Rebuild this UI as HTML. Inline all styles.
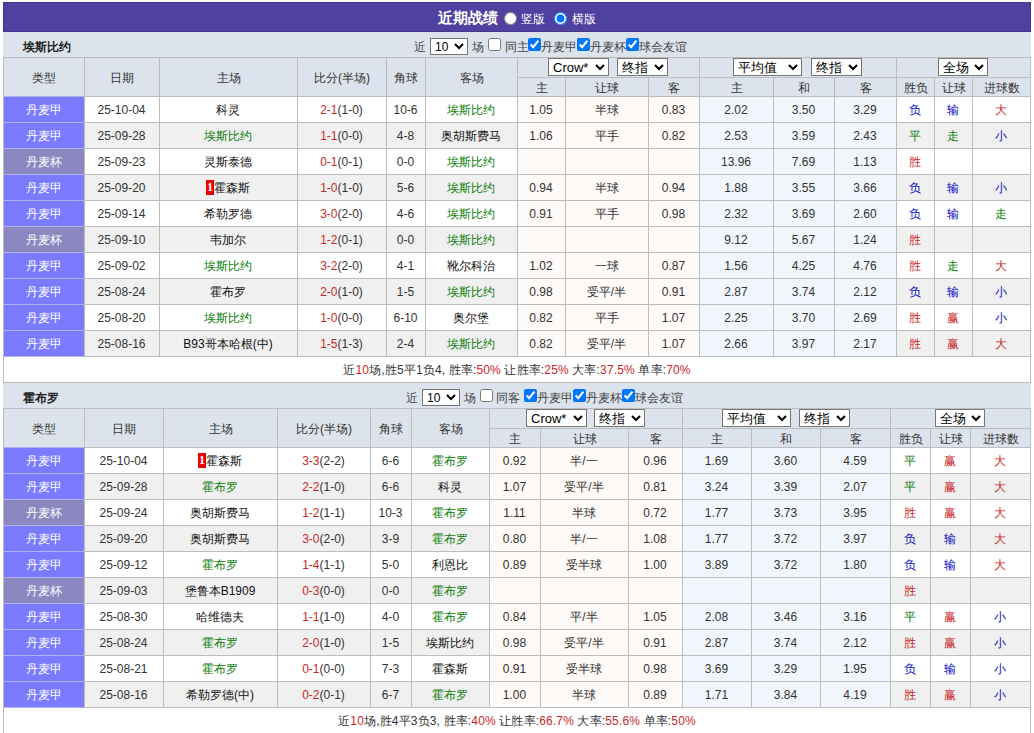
<!DOCTYPE html>
<html><head><meta charset="utf-8"><style>
html,body{margin:0;padding:0;background:#fff;width:1034px;height:733px;overflow:hidden}
body{position:relative;font-family:"Liberation Sans",sans-serif;font-size:12px;color:#333;font-weight:500}
div,select,input{position:absolute;box-sizing:border-box}
input{margin:0;width:13px;height:13px}
select{font-family:"Liberation Sans",sans-serif;padding:0;color:#000;background:#fff}
.t{text-align:center;white-space:nowrap}
.l{white-space:nowrap}
.tm{color:#111}
.bd{display:inline-block;background:#e00;color:#fff;width:8px;height:15px;line-height:15px;text-align:center;font-family:"Liberation Serif",serif;font-weight:bold;font-size:12px;vertical-align:middle;position:relative;top:-1px}
</style></head><body>
<div style="left:3px;top:2px;width:1028px;height:30px;background:#5040a0;box-sizing:border-box;border:1px solid #43378a"></div>
<div style="left:3px;top:32px;width:1028px;height:25px;background:#dde3ec"></div>
<div style="left:3px;top:57px;width:1028px;height:39px;background:#dde3ec"></div>
<div style="left:3px;top:96px;width:1028px;height:26px;background:#ffffff"></div>
<div style="left:3px;top:96px;width:81px;height:26px;background:#7b7bff"></div>
<div style="left:517px;top:96px;width:182px;height:26px;background:#fdfaf7"></div>
<div style="left:699px;top:96px;width:197px;height:26px;background:#f0f6fb"></div>
<div style="left:3px;top:122px;width:1028px;height:26px;background:#f0f0f0"></div>
<div style="left:3px;top:122px;width:81px;height:26px;background:#7b7bff"></div>
<div style="left:517px;top:122px;width:182px;height:26px;background:#fdfaf7"></div>
<div style="left:699px;top:122px;width:197px;height:26px;background:#f0f6fb"></div>
<div style="left:3px;top:148px;width:1028px;height:26px;background:#ffffff"></div>
<div style="left:3px;top:148px;width:81px;height:26px;background:#8b88c1"></div>
<div style="left:517px;top:148px;width:182px;height:26px;background:#fdfaf7"></div>
<div style="left:699px;top:148px;width:197px;height:26px;background:#f0f6fb"></div>
<div style="left:3px;top:174px;width:1028px;height:26px;background:#f0f0f0"></div>
<div style="left:3px;top:174px;width:81px;height:26px;background:#7b7bff"></div>
<div style="left:517px;top:174px;width:182px;height:26px;background:#fdfaf7"></div>
<div style="left:699px;top:174px;width:197px;height:26px;background:#f0f6fb"></div>
<div style="left:3px;top:200px;width:1028px;height:26px;background:#ffffff"></div>
<div style="left:3px;top:200px;width:81px;height:26px;background:#7b7bff"></div>
<div style="left:517px;top:200px;width:182px;height:26px;background:#fdfaf7"></div>
<div style="left:699px;top:200px;width:197px;height:26px;background:#f0f6fb"></div>
<div style="left:3px;top:226px;width:1028px;height:26px;background:#f0f0f0"></div>
<div style="left:3px;top:226px;width:81px;height:26px;background:#8b88c1"></div>
<div style="left:517px;top:226px;width:182px;height:26px;background:#fdfaf7"></div>
<div style="left:699px;top:226px;width:197px;height:26px;background:#f0f6fb"></div>
<div style="left:3px;top:252px;width:1028px;height:26px;background:#ffffff"></div>
<div style="left:3px;top:252px;width:81px;height:26px;background:#7b7bff"></div>
<div style="left:517px;top:252px;width:182px;height:26px;background:#fdfaf7"></div>
<div style="left:699px;top:252px;width:197px;height:26px;background:#f0f6fb"></div>
<div style="left:3px;top:278px;width:1028px;height:26px;background:#f0f0f0"></div>
<div style="left:3px;top:278px;width:81px;height:26px;background:#7b7bff"></div>
<div style="left:517px;top:278px;width:182px;height:26px;background:#fdfaf7"></div>
<div style="left:699px;top:278px;width:197px;height:26px;background:#f0f6fb"></div>
<div style="left:3px;top:304px;width:1028px;height:26px;background:#ffffff"></div>
<div style="left:3px;top:304px;width:81px;height:26px;background:#7b7bff"></div>
<div style="left:517px;top:304px;width:182px;height:26px;background:#fdfaf7"></div>
<div style="left:699px;top:304px;width:197px;height:26px;background:#f0f6fb"></div>
<div style="left:3px;top:330px;width:1028px;height:26px;background:#f0f0f0"></div>
<div style="left:3px;top:330px;width:81px;height:26px;background:#7b7bff"></div>
<div style="left:517px;top:330px;width:182px;height:26px;background:#fdfaf7"></div>
<div style="left:699px;top:330px;width:197px;height:26px;background:#f0f6fb"></div>
<div style="left:3px;top:356px;width:1028px;height:26px;background:#fff"></div>
<div style="left:3px;top:57px;width:1028px;height:1px;background:#bdbdbd"></div>
<div style="left:517px;top:77px;width:513px;height:1px;background:#bdbdbd"></div>
<div style="left:3px;top:96px;width:1028px;height:1px;background:#bdbdbd"></div>
<div style="left:4px;top:96px;width:80px;height:1px;background:#b2b0ee"></div>
<div style="left:3px;top:122px;width:1028px;height:1px;background:#bdbdbd"></div>
<div style="left:4px;top:122px;width:80px;height:1px;background:#b2b0ee"></div>
<div style="left:3px;top:148px;width:1028px;height:1px;background:#bdbdbd"></div>
<div style="left:4px;top:148px;width:80px;height:1px;background:#b2b0ee"></div>
<div style="left:3px;top:174px;width:1028px;height:1px;background:#bdbdbd"></div>
<div style="left:4px;top:174px;width:80px;height:1px;background:#b2b0ee"></div>
<div style="left:3px;top:200px;width:1028px;height:1px;background:#bdbdbd"></div>
<div style="left:4px;top:200px;width:80px;height:1px;background:#b2b0ee"></div>
<div style="left:3px;top:226px;width:1028px;height:1px;background:#bdbdbd"></div>
<div style="left:4px;top:226px;width:80px;height:1px;background:#b2b0ee"></div>
<div style="left:3px;top:252px;width:1028px;height:1px;background:#bdbdbd"></div>
<div style="left:4px;top:252px;width:80px;height:1px;background:#b2b0ee"></div>
<div style="left:3px;top:278px;width:1028px;height:1px;background:#bdbdbd"></div>
<div style="left:4px;top:278px;width:80px;height:1px;background:#b2b0ee"></div>
<div style="left:3px;top:304px;width:1028px;height:1px;background:#bdbdbd"></div>
<div style="left:4px;top:304px;width:80px;height:1px;background:#b2b0ee"></div>
<div style="left:3px;top:330px;width:1028px;height:1px;background:#bdbdbd"></div>
<div style="left:4px;top:330px;width:80px;height:1px;background:#b2b0ee"></div>
<div style="left:3px;top:356px;width:1028px;height:1px;background:#bdbdbd"></div>
<div style="left:4px;top:356px;width:80px;height:1px;background:#b2b0ee"></div>
<div style="left:3px;top:382px;width:1028px;height:1px;background:#bdbdbd"></div>
<div style="left:3px;top:57px;width:1px;height:325px;background:#bdbdbd"></div>
<div style="left:84px;top:57px;width:1px;height:299px;background:#bdbdbd"></div>
<div style="left:159px;top:57px;width:1px;height:299px;background:#bdbdbd"></div>
<div style="left:297px;top:57px;width:1px;height:299px;background:#bdbdbd"></div>
<div style="left:386px;top:57px;width:1px;height:299px;background:#bdbdbd"></div>
<div style="left:425px;top:57px;width:1px;height:299px;background:#bdbdbd"></div>
<div style="left:517px;top:57px;width:1px;height:299px;background:#bdbdbd"></div>
<div style="left:565px;top:77px;width:1px;height:279px;background:#bdbdbd"></div>
<div style="left:648px;top:77px;width:1px;height:279px;background:#bdbdbd"></div>
<div style="left:699px;top:57px;width:1px;height:299px;background:#bdbdbd"></div>
<div style="left:773px;top:77px;width:1px;height:279px;background:#bdbdbd"></div>
<div style="left:834px;top:77px;width:1px;height:279px;background:#bdbdbd"></div>
<div style="left:896px;top:57px;width:1px;height:299px;background:#bdbdbd"></div>
<div style="left:934px;top:77px;width:1px;height:279px;background:#bdbdbd"></div>
<div style="left:972px;top:77px;width:1px;height:279px;background:#bdbdbd"></div>
<div style="left:1030px;top:57px;width:1px;height:325px;background:#bdbdbd"></div>
<div class="t" style="left:4px;top:59px;width:80px;height:38px;line-height:38px;color:#333">类型</div>
<div class="t" style="left:85px;top:59px;width:74px;height:38px;line-height:38px;color:#333">日期</div>
<div class="t" style="left:160px;top:59px;width:137px;height:38px;line-height:38px;color:#333">主场</div>
<div class="t" style="left:298px;top:59px;width:88px;height:38px;line-height:38px;color:#333">比分(半场)</div>
<div class="t" style="left:387px;top:59px;width:38px;height:38px;line-height:38px;color:#333">角球</div>
<div class="t" style="left:426px;top:59px;width:91px;height:38px;line-height:38px;color:#333">客场</div>
<div class="t" style="left:518px;top:79px;width:47px;height:18px;line-height:18px;color:#333">主</div>
<div class="t" style="left:566px;top:79px;width:82px;height:18px;line-height:18px;color:#333">让球</div>
<div class="t" style="left:649px;top:79px;width:50px;height:18px;line-height:18px;color:#333">客</div>
<div class="t" style="left:700px;top:79px;width:73px;height:18px;line-height:18px;color:#333">主</div>
<div class="t" style="left:774px;top:79px;width:60px;height:18px;line-height:18px;color:#333">和</div>
<div class="t" style="left:835px;top:79px;width:61px;height:18px;line-height:18px;color:#333">客</div>
<div class="t" style="left:897px;top:79px;width:37px;height:18px;line-height:18px;color:#333">胜负</div>
<div class="t" style="left:935px;top:79px;width:37px;height:18px;line-height:18px;color:#333">让球</div>
<div class="t" style="left:973px;top:79px;width:57px;height:18px;line-height:18px;color:#333">进球数</div>
<div class="t" style="left:3px;top:98px;width:81px;height:25px;line-height:25px;color:#fff">丹麦甲</div>
<div class="t" style="left:84px;top:98px;width:75px;height:25px;line-height:25px;">25-10-04</div>
<div class="t" style="left:159px;top:98px;width:138px;height:25px;line-height:25px;"><span class="tm">科灵</span></div>
<div class="t" style="left:297px;top:98px;width:89px;height:25px;line-height:25px;"><span style="color:#c92828">2-1</span>(1-0)</div>
<div class="t" style="left:386px;top:98px;width:39px;height:25px;line-height:25px;">10-6</div>
<div class="t" style="left:425px;top:98px;width:92px;height:25px;line-height:25px;"><span style="color:#0a7d0a">埃斯比约</span></div>
<div class="t" style="left:517px;top:98px;width:48px;height:25px;line-height:25px;">1.05</div>
<div class="t" style="left:565px;top:98px;width:83px;height:25px;line-height:25px;">半球</div>
<div class="t" style="left:648px;top:98px;width:51px;height:25px;line-height:25px;">0.83</div>
<div class="t" style="left:699px;top:98px;width:74px;height:25px;line-height:25px;">2.02</div>
<div class="t" style="left:773px;top:98px;width:61px;height:25px;line-height:25px;">3.50</div>
<div class="t" style="left:834px;top:98px;width:62px;height:25px;line-height:25px;">3.29</div>
<div class="t" style="left:896px;top:98px;width:38px;height:25px;line-height:25px;"><span style="color:#0a0ac8">负</span></div>
<div class="t" style="left:934px;top:98px;width:38px;height:25px;line-height:25px;"><span style="color:#0a0ac8">输</span></div>
<div class="t" style="left:972px;top:98px;width:58px;height:25px;line-height:25px;"><span style="color:#c92828">大</span></div>
<div class="t" style="left:3px;top:124px;width:81px;height:25px;line-height:25px;color:#fff">丹麦甲</div>
<div class="t" style="left:84px;top:124px;width:75px;height:25px;line-height:25px;">25-09-28</div>
<div class="t" style="left:159px;top:124px;width:138px;height:25px;line-height:25px;"><span style="color:#0a7d0a">埃斯比约</span></div>
<div class="t" style="left:297px;top:124px;width:89px;height:25px;line-height:25px;"><span style="color:#c92828">1-1</span>(0-0)</div>
<div class="t" style="left:386px;top:124px;width:39px;height:25px;line-height:25px;">4-8</div>
<div class="t" style="left:425px;top:124px;width:92px;height:25px;line-height:25px;"><span class="tm">奥胡斯费马</span></div>
<div class="t" style="left:517px;top:124px;width:48px;height:25px;line-height:25px;">1.06</div>
<div class="t" style="left:565px;top:124px;width:83px;height:25px;line-height:25px;">平手</div>
<div class="t" style="left:648px;top:124px;width:51px;height:25px;line-height:25px;">0.82</div>
<div class="t" style="left:699px;top:124px;width:74px;height:25px;line-height:25px;">2.53</div>
<div class="t" style="left:773px;top:124px;width:61px;height:25px;line-height:25px;">3.59</div>
<div class="t" style="left:834px;top:124px;width:62px;height:25px;line-height:25px;">2.43</div>
<div class="t" style="left:896px;top:124px;width:38px;height:25px;line-height:25px;"><span style="color:#0a7d0a">平</span></div>
<div class="t" style="left:934px;top:124px;width:38px;height:25px;line-height:25px;"><span style="color:#0a7d0a">走</span></div>
<div class="t" style="left:972px;top:124px;width:58px;height:25px;line-height:25px;"><span style="color:#0a0ac8">小</span></div>
<div class="t" style="left:3px;top:150px;width:81px;height:25px;line-height:25px;color:#fff">丹麦杯</div>
<div class="t" style="left:84px;top:150px;width:75px;height:25px;line-height:25px;">25-09-23</div>
<div class="t" style="left:159px;top:150px;width:138px;height:25px;line-height:25px;"><span class="tm">灵斯泰德</span></div>
<div class="t" style="left:297px;top:150px;width:89px;height:25px;line-height:25px;"><span style="color:#c92828">0-1</span>(0-1)</div>
<div class="t" style="left:386px;top:150px;width:39px;height:25px;line-height:25px;">0-0</div>
<div class="t" style="left:425px;top:150px;width:92px;height:25px;line-height:25px;"><span style="color:#0a7d0a">埃斯比约</span></div>
<div class="t" style="left:699px;top:150px;width:74px;height:25px;line-height:25px;">13.96</div>
<div class="t" style="left:773px;top:150px;width:61px;height:25px;line-height:25px;">7.69</div>
<div class="t" style="left:834px;top:150px;width:62px;height:25px;line-height:25px;">1.13</div>
<div class="t" style="left:896px;top:150px;width:38px;height:25px;line-height:25px;"><span style="color:#c92828">胜</span></div>
<div class="t" style="left:3px;top:176px;width:81px;height:25px;line-height:25px;color:#fff">丹麦甲</div>
<div class="t" style="left:84px;top:176px;width:75px;height:25px;line-height:25px;">25-09-20</div>
<div class="t" style="left:159px;top:176px;width:138px;height:25px;line-height:25px;"><span class="bd">1</span><span class="tm">霍森斯</span></div>
<div class="t" style="left:297px;top:176px;width:89px;height:25px;line-height:25px;"><span style="color:#c92828">1-0</span>(1-0)</div>
<div class="t" style="left:386px;top:176px;width:39px;height:25px;line-height:25px;">5-6</div>
<div class="t" style="left:425px;top:176px;width:92px;height:25px;line-height:25px;"><span style="color:#0a7d0a">埃斯比约</span></div>
<div class="t" style="left:517px;top:176px;width:48px;height:25px;line-height:25px;">0.94</div>
<div class="t" style="left:565px;top:176px;width:83px;height:25px;line-height:25px;">半球</div>
<div class="t" style="left:648px;top:176px;width:51px;height:25px;line-height:25px;">0.94</div>
<div class="t" style="left:699px;top:176px;width:74px;height:25px;line-height:25px;">1.88</div>
<div class="t" style="left:773px;top:176px;width:61px;height:25px;line-height:25px;">3.55</div>
<div class="t" style="left:834px;top:176px;width:62px;height:25px;line-height:25px;">3.66</div>
<div class="t" style="left:896px;top:176px;width:38px;height:25px;line-height:25px;"><span style="color:#0a0ac8">负</span></div>
<div class="t" style="left:934px;top:176px;width:38px;height:25px;line-height:25px;"><span style="color:#0a0ac8">输</span></div>
<div class="t" style="left:972px;top:176px;width:58px;height:25px;line-height:25px;"><span style="color:#0a0ac8">小</span></div>
<div class="t" style="left:3px;top:202px;width:81px;height:25px;line-height:25px;color:#fff">丹麦甲</div>
<div class="t" style="left:84px;top:202px;width:75px;height:25px;line-height:25px;">25-09-14</div>
<div class="t" style="left:159px;top:202px;width:138px;height:25px;line-height:25px;"><span class="tm">希勒罗德</span></div>
<div class="t" style="left:297px;top:202px;width:89px;height:25px;line-height:25px;"><span style="color:#c92828">3-0</span>(2-0)</div>
<div class="t" style="left:386px;top:202px;width:39px;height:25px;line-height:25px;">4-6</div>
<div class="t" style="left:425px;top:202px;width:92px;height:25px;line-height:25px;"><span style="color:#0a7d0a">埃斯比约</span></div>
<div class="t" style="left:517px;top:202px;width:48px;height:25px;line-height:25px;">0.91</div>
<div class="t" style="left:565px;top:202px;width:83px;height:25px;line-height:25px;">平手</div>
<div class="t" style="left:648px;top:202px;width:51px;height:25px;line-height:25px;">0.98</div>
<div class="t" style="left:699px;top:202px;width:74px;height:25px;line-height:25px;">2.32</div>
<div class="t" style="left:773px;top:202px;width:61px;height:25px;line-height:25px;">3.69</div>
<div class="t" style="left:834px;top:202px;width:62px;height:25px;line-height:25px;">2.60</div>
<div class="t" style="left:896px;top:202px;width:38px;height:25px;line-height:25px;"><span style="color:#0a0ac8">负</span></div>
<div class="t" style="left:934px;top:202px;width:38px;height:25px;line-height:25px;"><span style="color:#0a0ac8">输</span></div>
<div class="t" style="left:972px;top:202px;width:58px;height:25px;line-height:25px;"><span style="color:#0a7d0a">走</span></div>
<div class="t" style="left:3px;top:228px;width:81px;height:25px;line-height:25px;color:#fff">丹麦杯</div>
<div class="t" style="left:84px;top:228px;width:75px;height:25px;line-height:25px;">25-09-10</div>
<div class="t" style="left:159px;top:228px;width:138px;height:25px;line-height:25px;"><span class="tm">韦加尔</span></div>
<div class="t" style="left:297px;top:228px;width:89px;height:25px;line-height:25px;"><span style="color:#c92828">1-2</span>(0-1)</div>
<div class="t" style="left:386px;top:228px;width:39px;height:25px;line-height:25px;">0-0</div>
<div class="t" style="left:425px;top:228px;width:92px;height:25px;line-height:25px;"><span style="color:#0a7d0a">埃斯比约</span></div>
<div class="t" style="left:699px;top:228px;width:74px;height:25px;line-height:25px;">9.12</div>
<div class="t" style="left:773px;top:228px;width:61px;height:25px;line-height:25px;">5.67</div>
<div class="t" style="left:834px;top:228px;width:62px;height:25px;line-height:25px;">1.24</div>
<div class="t" style="left:896px;top:228px;width:38px;height:25px;line-height:25px;"><span style="color:#c92828">胜</span></div>
<div class="t" style="left:3px;top:254px;width:81px;height:25px;line-height:25px;color:#fff">丹麦甲</div>
<div class="t" style="left:84px;top:254px;width:75px;height:25px;line-height:25px;">25-09-02</div>
<div class="t" style="left:159px;top:254px;width:138px;height:25px;line-height:25px;"><span style="color:#0a7d0a">埃斯比约</span></div>
<div class="t" style="left:297px;top:254px;width:89px;height:25px;line-height:25px;"><span style="color:#c92828">3-2</span>(2-0)</div>
<div class="t" style="left:386px;top:254px;width:39px;height:25px;line-height:25px;">4-1</div>
<div class="t" style="left:425px;top:254px;width:92px;height:25px;line-height:25px;"><span class="tm">靴尔科治</span></div>
<div class="t" style="left:517px;top:254px;width:48px;height:25px;line-height:25px;">1.02</div>
<div class="t" style="left:565px;top:254px;width:83px;height:25px;line-height:25px;">一球</div>
<div class="t" style="left:648px;top:254px;width:51px;height:25px;line-height:25px;">0.87</div>
<div class="t" style="left:699px;top:254px;width:74px;height:25px;line-height:25px;">1.56</div>
<div class="t" style="left:773px;top:254px;width:61px;height:25px;line-height:25px;">4.25</div>
<div class="t" style="left:834px;top:254px;width:62px;height:25px;line-height:25px;">4.76</div>
<div class="t" style="left:896px;top:254px;width:38px;height:25px;line-height:25px;"><span style="color:#c92828">胜</span></div>
<div class="t" style="left:934px;top:254px;width:38px;height:25px;line-height:25px;"><span style="color:#0a7d0a">走</span></div>
<div class="t" style="left:972px;top:254px;width:58px;height:25px;line-height:25px;"><span style="color:#c92828">大</span></div>
<div class="t" style="left:3px;top:280px;width:81px;height:25px;line-height:25px;color:#fff">丹麦甲</div>
<div class="t" style="left:84px;top:280px;width:75px;height:25px;line-height:25px;">25-08-24</div>
<div class="t" style="left:159px;top:280px;width:138px;height:25px;line-height:25px;"><span class="tm">霍布罗</span></div>
<div class="t" style="left:297px;top:280px;width:89px;height:25px;line-height:25px;"><span style="color:#c92828">2-0</span>(1-0)</div>
<div class="t" style="left:386px;top:280px;width:39px;height:25px;line-height:25px;">1-5</div>
<div class="t" style="left:425px;top:280px;width:92px;height:25px;line-height:25px;"><span style="color:#0a7d0a">埃斯比约</span></div>
<div class="t" style="left:517px;top:280px;width:48px;height:25px;line-height:25px;">0.98</div>
<div class="t" style="left:565px;top:280px;width:83px;height:25px;line-height:25px;">受平/半</div>
<div class="t" style="left:648px;top:280px;width:51px;height:25px;line-height:25px;">0.91</div>
<div class="t" style="left:699px;top:280px;width:74px;height:25px;line-height:25px;">2.87</div>
<div class="t" style="left:773px;top:280px;width:61px;height:25px;line-height:25px;">3.74</div>
<div class="t" style="left:834px;top:280px;width:62px;height:25px;line-height:25px;">2.12</div>
<div class="t" style="left:896px;top:280px;width:38px;height:25px;line-height:25px;"><span style="color:#0a0ac8">负</span></div>
<div class="t" style="left:934px;top:280px;width:38px;height:25px;line-height:25px;"><span style="color:#0a0ac8">输</span></div>
<div class="t" style="left:972px;top:280px;width:58px;height:25px;line-height:25px;"><span style="color:#0a0ac8">小</span></div>
<div class="t" style="left:3px;top:306px;width:81px;height:25px;line-height:25px;color:#fff">丹麦甲</div>
<div class="t" style="left:84px;top:306px;width:75px;height:25px;line-height:25px;">25-08-20</div>
<div class="t" style="left:159px;top:306px;width:138px;height:25px;line-height:25px;"><span style="color:#0a7d0a">埃斯比约</span></div>
<div class="t" style="left:297px;top:306px;width:89px;height:25px;line-height:25px;"><span style="color:#c92828">1-0</span>(0-0)</div>
<div class="t" style="left:386px;top:306px;width:39px;height:25px;line-height:25px;">6-10</div>
<div class="t" style="left:425px;top:306px;width:92px;height:25px;line-height:25px;"><span class="tm">奥尔堡</span></div>
<div class="t" style="left:517px;top:306px;width:48px;height:25px;line-height:25px;">0.82</div>
<div class="t" style="left:565px;top:306px;width:83px;height:25px;line-height:25px;">平手</div>
<div class="t" style="left:648px;top:306px;width:51px;height:25px;line-height:25px;">1.07</div>
<div class="t" style="left:699px;top:306px;width:74px;height:25px;line-height:25px;">2.25</div>
<div class="t" style="left:773px;top:306px;width:61px;height:25px;line-height:25px;">3.70</div>
<div class="t" style="left:834px;top:306px;width:62px;height:25px;line-height:25px;">2.69</div>
<div class="t" style="left:896px;top:306px;width:38px;height:25px;line-height:25px;"><span style="color:#c92828">胜</span></div>
<div class="t" style="left:934px;top:306px;width:38px;height:25px;line-height:25px;"><span style="color:#c92828">赢</span></div>
<div class="t" style="left:972px;top:306px;width:58px;height:25px;line-height:25px;"><span style="color:#0a0ac8">小</span></div>
<div class="t" style="left:3px;top:332px;width:81px;height:25px;line-height:25px;color:#fff">丹麦甲</div>
<div class="t" style="left:84px;top:332px;width:75px;height:25px;line-height:25px;">25-08-16</div>
<div class="t" style="left:159px;top:332px;width:138px;height:25px;line-height:25px;"><span class="tm">B93哥本哈根(中)</span></div>
<div class="t" style="left:297px;top:332px;width:89px;height:25px;line-height:25px;"><span style="color:#c92828">1-5</span>(1-3)</div>
<div class="t" style="left:386px;top:332px;width:39px;height:25px;line-height:25px;">2-4</div>
<div class="t" style="left:425px;top:332px;width:92px;height:25px;line-height:25px;"><span style="color:#0a7d0a">埃斯比约</span></div>
<div class="t" style="left:517px;top:332px;width:48px;height:25px;line-height:25px;">0.82</div>
<div class="t" style="left:565px;top:332px;width:83px;height:25px;line-height:25px;">受平/半</div>
<div class="t" style="left:648px;top:332px;width:51px;height:25px;line-height:25px;">1.07</div>
<div class="t" style="left:699px;top:332px;width:74px;height:25px;line-height:25px;">2.66</div>
<div class="t" style="left:773px;top:332px;width:61px;height:25px;line-height:25px;">3.97</div>
<div class="t" style="left:834px;top:332px;width:62px;height:25px;line-height:25px;">2.17</div>
<div class="t" style="left:896px;top:332px;width:38px;height:25px;line-height:25px;"><span style="color:#c92828">胜</span></div>
<div class="t" style="left:934px;top:332px;width:38px;height:25px;line-height:25px;"><span style="color:#c92828">赢</span></div>
<div class="t" style="left:972px;top:332px;width:58px;height:25px;line-height:25px;"><span style="color:#c92828">大</span></div>
<div class="t" style="left:4px;top:358px;width:1026px;height:25px;line-height:25px;letter-spacing:0.15px">近<span style="color:#c92828">10</span>场,胜5平1负4, 胜率:<span style="color:#c92828">50%</span> 让胜率:<span style="color:#c92828">25%</span> 大率:<span style="color:#c92828">37.5%</span> 单率:<span style="color:#c92828">70%</span></div>
<div style="left:3px;top:383px;width:1028px;height:25px;background:#dde3ec"></div>
<div style="left:3px;top:408px;width:1028px;height:39px;background:#dde3ec"></div>
<div style="left:3px;top:447px;width:1028px;height:26px;background:#ffffff"></div>
<div style="left:3px;top:447px;width:81px;height:26px;background:#7b7bff"></div>
<div style="left:489px;top:447px;width:193px;height:26px;background:#fdfaf7"></div>
<div style="left:682px;top:447px;width:208px;height:26px;background:#f0f6fb"></div>
<div style="left:3px;top:473px;width:1028px;height:26px;background:#f0f0f0"></div>
<div style="left:3px;top:473px;width:81px;height:26px;background:#7b7bff"></div>
<div style="left:489px;top:473px;width:193px;height:26px;background:#fdfaf7"></div>
<div style="left:682px;top:473px;width:208px;height:26px;background:#f0f6fb"></div>
<div style="left:3px;top:499px;width:1028px;height:26px;background:#ffffff"></div>
<div style="left:3px;top:499px;width:81px;height:26px;background:#8b88c1"></div>
<div style="left:489px;top:499px;width:193px;height:26px;background:#fdfaf7"></div>
<div style="left:682px;top:499px;width:208px;height:26px;background:#f0f6fb"></div>
<div style="left:3px;top:525px;width:1028px;height:26px;background:#f0f0f0"></div>
<div style="left:3px;top:525px;width:81px;height:26px;background:#7b7bff"></div>
<div style="left:489px;top:525px;width:193px;height:26px;background:#fdfaf7"></div>
<div style="left:682px;top:525px;width:208px;height:26px;background:#f0f6fb"></div>
<div style="left:3px;top:551px;width:1028px;height:26px;background:#ffffff"></div>
<div style="left:3px;top:551px;width:81px;height:26px;background:#7b7bff"></div>
<div style="left:489px;top:551px;width:193px;height:26px;background:#fdfaf7"></div>
<div style="left:682px;top:551px;width:208px;height:26px;background:#f0f6fb"></div>
<div style="left:3px;top:577px;width:1028px;height:26px;background:#f0f0f0"></div>
<div style="left:3px;top:577px;width:81px;height:26px;background:#8b88c1"></div>
<div style="left:489px;top:577px;width:193px;height:26px;background:#fdfaf7"></div>
<div style="left:682px;top:577px;width:208px;height:26px;background:#f0f6fb"></div>
<div style="left:3px;top:603px;width:1028px;height:26px;background:#ffffff"></div>
<div style="left:3px;top:603px;width:81px;height:26px;background:#7b7bff"></div>
<div style="left:489px;top:603px;width:193px;height:26px;background:#fdfaf7"></div>
<div style="left:682px;top:603px;width:208px;height:26px;background:#f0f6fb"></div>
<div style="left:3px;top:629px;width:1028px;height:26px;background:#f0f0f0"></div>
<div style="left:3px;top:629px;width:81px;height:26px;background:#7b7bff"></div>
<div style="left:489px;top:629px;width:193px;height:26px;background:#fdfaf7"></div>
<div style="left:682px;top:629px;width:208px;height:26px;background:#f0f6fb"></div>
<div style="left:3px;top:655px;width:1028px;height:26px;background:#ffffff"></div>
<div style="left:3px;top:655px;width:81px;height:26px;background:#7b7bff"></div>
<div style="left:489px;top:655px;width:193px;height:26px;background:#fdfaf7"></div>
<div style="left:682px;top:655px;width:208px;height:26px;background:#f0f6fb"></div>
<div style="left:3px;top:681px;width:1028px;height:26px;background:#f0f0f0"></div>
<div style="left:3px;top:681px;width:81px;height:26px;background:#7b7bff"></div>
<div style="left:489px;top:681px;width:193px;height:26px;background:#fdfaf7"></div>
<div style="left:682px;top:681px;width:208px;height:26px;background:#f0f6fb"></div>
<div style="left:3px;top:707px;width:1028px;height:26px;background:#fff"></div>
<div style="left:3px;top:408px;width:1028px;height:1px;background:#bdbdbd"></div>
<div style="left:489px;top:428px;width:541px;height:1px;background:#bdbdbd"></div>
<div style="left:3px;top:447px;width:1028px;height:1px;background:#bdbdbd"></div>
<div style="left:4px;top:447px;width:80px;height:1px;background:#b2b0ee"></div>
<div style="left:3px;top:473px;width:1028px;height:1px;background:#bdbdbd"></div>
<div style="left:4px;top:473px;width:80px;height:1px;background:#b2b0ee"></div>
<div style="left:3px;top:499px;width:1028px;height:1px;background:#bdbdbd"></div>
<div style="left:4px;top:499px;width:80px;height:1px;background:#b2b0ee"></div>
<div style="left:3px;top:525px;width:1028px;height:1px;background:#bdbdbd"></div>
<div style="left:4px;top:525px;width:80px;height:1px;background:#b2b0ee"></div>
<div style="left:3px;top:551px;width:1028px;height:1px;background:#bdbdbd"></div>
<div style="left:4px;top:551px;width:80px;height:1px;background:#b2b0ee"></div>
<div style="left:3px;top:577px;width:1028px;height:1px;background:#bdbdbd"></div>
<div style="left:4px;top:577px;width:80px;height:1px;background:#b2b0ee"></div>
<div style="left:3px;top:603px;width:1028px;height:1px;background:#bdbdbd"></div>
<div style="left:4px;top:603px;width:80px;height:1px;background:#b2b0ee"></div>
<div style="left:3px;top:629px;width:1028px;height:1px;background:#bdbdbd"></div>
<div style="left:4px;top:629px;width:80px;height:1px;background:#b2b0ee"></div>
<div style="left:3px;top:655px;width:1028px;height:1px;background:#bdbdbd"></div>
<div style="left:4px;top:655px;width:80px;height:1px;background:#b2b0ee"></div>
<div style="left:3px;top:681px;width:1028px;height:1px;background:#bdbdbd"></div>
<div style="left:4px;top:681px;width:80px;height:1px;background:#b2b0ee"></div>
<div style="left:3px;top:707px;width:1028px;height:1px;background:#bdbdbd"></div>
<div style="left:4px;top:707px;width:80px;height:1px;background:#b2b0ee"></div>
<div style="left:3px;top:733px;width:1028px;height:1px;background:#bdbdbd"></div>
<div style="left:3px;top:408px;width:1px;height:325px;background:#bdbdbd"></div>
<div style="left:84px;top:408px;width:1px;height:299px;background:#bdbdbd"></div>
<div style="left:163px;top:408px;width:1px;height:299px;background:#bdbdbd"></div>
<div style="left:277px;top:408px;width:1px;height:299px;background:#bdbdbd"></div>
<div style="left:370px;top:408px;width:1px;height:299px;background:#bdbdbd"></div>
<div style="left:411px;top:408px;width:1px;height:299px;background:#bdbdbd"></div>
<div style="left:489px;top:408px;width:1px;height:299px;background:#bdbdbd"></div>
<div style="left:540px;top:428px;width:1px;height:279px;background:#bdbdbd"></div>
<div style="left:628px;top:428px;width:1px;height:279px;background:#bdbdbd"></div>
<div style="left:682px;top:408px;width:1px;height:299px;background:#bdbdbd"></div>
<div style="left:751px;top:428px;width:1px;height:279px;background:#bdbdbd"></div>
<div style="left:820px;top:428px;width:1px;height:279px;background:#bdbdbd"></div>
<div style="left:890px;top:408px;width:1px;height:299px;background:#bdbdbd"></div>
<div style="left:930px;top:428px;width:1px;height:279px;background:#bdbdbd"></div>
<div style="left:970px;top:428px;width:1px;height:279px;background:#bdbdbd"></div>
<div style="left:1030px;top:408px;width:1px;height:325px;background:#bdbdbd"></div>
<div class="t" style="left:4px;top:410px;width:80px;height:38px;line-height:38px;color:#333">类型</div>
<div class="t" style="left:85px;top:410px;width:78px;height:38px;line-height:38px;color:#333">日期</div>
<div class="t" style="left:164px;top:410px;width:113px;height:38px;line-height:38px;color:#333">主场</div>
<div class="t" style="left:278px;top:410px;width:92px;height:38px;line-height:38px;color:#333">比分(半场)</div>
<div class="t" style="left:371px;top:410px;width:40px;height:38px;line-height:38px;color:#333">角球</div>
<div class="t" style="left:412px;top:410px;width:77px;height:38px;line-height:38px;color:#333">客场</div>
<div class="t" style="left:490px;top:430px;width:50px;height:18px;line-height:18px;color:#333">主</div>
<div class="t" style="left:541px;top:430px;width:87px;height:18px;line-height:18px;color:#333">让球</div>
<div class="t" style="left:629px;top:430px;width:53px;height:18px;line-height:18px;color:#333">客</div>
<div class="t" style="left:683px;top:430px;width:68px;height:18px;line-height:18px;color:#333">主</div>
<div class="t" style="left:752px;top:430px;width:68px;height:18px;line-height:18px;color:#333">和</div>
<div class="t" style="left:821px;top:430px;width:69px;height:18px;line-height:18px;color:#333">客</div>
<div class="t" style="left:891px;top:430px;width:39px;height:18px;line-height:18px;color:#333">胜负</div>
<div class="t" style="left:931px;top:430px;width:39px;height:18px;line-height:18px;color:#333">让球</div>
<div class="t" style="left:971px;top:430px;width:59px;height:18px;line-height:18px;color:#333">进球数</div>
<div class="t" style="left:3px;top:449px;width:81px;height:25px;line-height:25px;color:#fff">丹麦甲</div>
<div class="t" style="left:84px;top:449px;width:79px;height:25px;line-height:25px;">25-10-04</div>
<div class="t" style="left:163px;top:449px;width:114px;height:25px;line-height:25px;"><span class="bd">1</span><span class="tm">霍森斯</span></div>
<div class="t" style="left:277px;top:449px;width:93px;height:25px;line-height:25px;"><span style="color:#c92828">3-3</span>(2-2)</div>
<div class="t" style="left:370px;top:449px;width:41px;height:25px;line-height:25px;">6-6</div>
<div class="t" style="left:411px;top:449px;width:78px;height:25px;line-height:25px;"><span style="color:#0a7d0a">霍布罗</span></div>
<div class="t" style="left:489px;top:449px;width:51px;height:25px;line-height:25px;">0.92</div>
<div class="t" style="left:540px;top:449px;width:88px;height:25px;line-height:25px;">半/一</div>
<div class="t" style="left:628px;top:449px;width:54px;height:25px;line-height:25px;">0.96</div>
<div class="t" style="left:682px;top:449px;width:69px;height:25px;line-height:25px;">1.69</div>
<div class="t" style="left:751px;top:449px;width:69px;height:25px;line-height:25px;">3.60</div>
<div class="t" style="left:820px;top:449px;width:70px;height:25px;line-height:25px;">4.59</div>
<div class="t" style="left:890px;top:449px;width:40px;height:25px;line-height:25px;"><span style="color:#0a7d0a">平</span></div>
<div class="t" style="left:930px;top:449px;width:40px;height:25px;line-height:25px;"><span style="color:#c92828">赢</span></div>
<div class="t" style="left:970px;top:449px;width:60px;height:25px;line-height:25px;"><span style="color:#c92828">大</span></div>
<div class="t" style="left:3px;top:475px;width:81px;height:25px;line-height:25px;color:#fff">丹麦甲</div>
<div class="t" style="left:84px;top:475px;width:79px;height:25px;line-height:25px;">25-09-28</div>
<div class="t" style="left:163px;top:475px;width:114px;height:25px;line-height:25px;"><span style="color:#0a7d0a">霍布罗</span></div>
<div class="t" style="left:277px;top:475px;width:93px;height:25px;line-height:25px;"><span style="color:#c92828">2-2</span>(1-0)</div>
<div class="t" style="left:370px;top:475px;width:41px;height:25px;line-height:25px;">6-6</div>
<div class="t" style="left:411px;top:475px;width:78px;height:25px;line-height:25px;"><span class="tm">科灵</span></div>
<div class="t" style="left:489px;top:475px;width:51px;height:25px;line-height:25px;">1.07</div>
<div class="t" style="left:540px;top:475px;width:88px;height:25px;line-height:25px;">受平/半</div>
<div class="t" style="left:628px;top:475px;width:54px;height:25px;line-height:25px;">0.81</div>
<div class="t" style="left:682px;top:475px;width:69px;height:25px;line-height:25px;">3.24</div>
<div class="t" style="left:751px;top:475px;width:69px;height:25px;line-height:25px;">3.39</div>
<div class="t" style="left:820px;top:475px;width:70px;height:25px;line-height:25px;">2.07</div>
<div class="t" style="left:890px;top:475px;width:40px;height:25px;line-height:25px;"><span style="color:#0a7d0a">平</span></div>
<div class="t" style="left:930px;top:475px;width:40px;height:25px;line-height:25px;"><span style="color:#c92828">赢</span></div>
<div class="t" style="left:970px;top:475px;width:60px;height:25px;line-height:25px;"><span style="color:#c92828">大</span></div>
<div class="t" style="left:3px;top:501px;width:81px;height:25px;line-height:25px;color:#fff">丹麦杯</div>
<div class="t" style="left:84px;top:501px;width:79px;height:25px;line-height:25px;">25-09-24</div>
<div class="t" style="left:163px;top:501px;width:114px;height:25px;line-height:25px;"><span class="tm">奥胡斯费马</span></div>
<div class="t" style="left:277px;top:501px;width:93px;height:25px;line-height:25px;"><span style="color:#c92828">1-2</span>(1-1)</div>
<div class="t" style="left:370px;top:501px;width:41px;height:25px;line-height:25px;">10-3</div>
<div class="t" style="left:411px;top:501px;width:78px;height:25px;line-height:25px;"><span style="color:#0a7d0a">霍布罗</span></div>
<div class="t" style="left:489px;top:501px;width:51px;height:25px;line-height:25px;">1.11</div>
<div class="t" style="left:540px;top:501px;width:88px;height:25px;line-height:25px;">半球</div>
<div class="t" style="left:628px;top:501px;width:54px;height:25px;line-height:25px;">0.72</div>
<div class="t" style="left:682px;top:501px;width:69px;height:25px;line-height:25px;">1.77</div>
<div class="t" style="left:751px;top:501px;width:69px;height:25px;line-height:25px;">3.73</div>
<div class="t" style="left:820px;top:501px;width:70px;height:25px;line-height:25px;">3.95</div>
<div class="t" style="left:890px;top:501px;width:40px;height:25px;line-height:25px;"><span style="color:#c92828">胜</span></div>
<div class="t" style="left:930px;top:501px;width:40px;height:25px;line-height:25px;"><span style="color:#c92828">赢</span></div>
<div class="t" style="left:970px;top:501px;width:60px;height:25px;line-height:25px;"><span style="color:#c92828">大</span></div>
<div class="t" style="left:3px;top:527px;width:81px;height:25px;line-height:25px;color:#fff">丹麦甲</div>
<div class="t" style="left:84px;top:527px;width:79px;height:25px;line-height:25px;">25-09-20</div>
<div class="t" style="left:163px;top:527px;width:114px;height:25px;line-height:25px;"><span class="tm">奥胡斯费马</span></div>
<div class="t" style="left:277px;top:527px;width:93px;height:25px;line-height:25px;"><span style="color:#c92828">3-0</span>(2-0)</div>
<div class="t" style="left:370px;top:527px;width:41px;height:25px;line-height:25px;">3-9</div>
<div class="t" style="left:411px;top:527px;width:78px;height:25px;line-height:25px;"><span style="color:#0a7d0a">霍布罗</span></div>
<div class="t" style="left:489px;top:527px;width:51px;height:25px;line-height:25px;">0.80</div>
<div class="t" style="left:540px;top:527px;width:88px;height:25px;line-height:25px;">半/一</div>
<div class="t" style="left:628px;top:527px;width:54px;height:25px;line-height:25px;">1.08</div>
<div class="t" style="left:682px;top:527px;width:69px;height:25px;line-height:25px;">1.77</div>
<div class="t" style="left:751px;top:527px;width:69px;height:25px;line-height:25px;">3.72</div>
<div class="t" style="left:820px;top:527px;width:70px;height:25px;line-height:25px;">3.97</div>
<div class="t" style="left:890px;top:527px;width:40px;height:25px;line-height:25px;"><span style="color:#0a0ac8">负</span></div>
<div class="t" style="left:930px;top:527px;width:40px;height:25px;line-height:25px;"><span style="color:#0a0ac8">输</span></div>
<div class="t" style="left:970px;top:527px;width:60px;height:25px;line-height:25px;"><span style="color:#c92828">大</span></div>
<div class="t" style="left:3px;top:553px;width:81px;height:25px;line-height:25px;color:#fff">丹麦甲</div>
<div class="t" style="left:84px;top:553px;width:79px;height:25px;line-height:25px;">25-09-12</div>
<div class="t" style="left:163px;top:553px;width:114px;height:25px;line-height:25px;"><span style="color:#0a7d0a">霍布罗</span></div>
<div class="t" style="left:277px;top:553px;width:93px;height:25px;line-height:25px;"><span style="color:#c92828">1-4</span>(1-1)</div>
<div class="t" style="left:370px;top:553px;width:41px;height:25px;line-height:25px;">5-0</div>
<div class="t" style="left:411px;top:553px;width:78px;height:25px;line-height:25px;"><span class="tm">利恩比</span></div>
<div class="t" style="left:489px;top:553px;width:51px;height:25px;line-height:25px;">0.89</div>
<div class="t" style="left:540px;top:553px;width:88px;height:25px;line-height:25px;">受半球</div>
<div class="t" style="left:628px;top:553px;width:54px;height:25px;line-height:25px;">1.00</div>
<div class="t" style="left:682px;top:553px;width:69px;height:25px;line-height:25px;">3.89</div>
<div class="t" style="left:751px;top:553px;width:69px;height:25px;line-height:25px;">3.72</div>
<div class="t" style="left:820px;top:553px;width:70px;height:25px;line-height:25px;">1.80</div>
<div class="t" style="left:890px;top:553px;width:40px;height:25px;line-height:25px;"><span style="color:#0a0ac8">负</span></div>
<div class="t" style="left:930px;top:553px;width:40px;height:25px;line-height:25px;"><span style="color:#0a0ac8">输</span></div>
<div class="t" style="left:970px;top:553px;width:60px;height:25px;line-height:25px;"><span style="color:#c92828">大</span></div>
<div class="t" style="left:3px;top:579px;width:81px;height:25px;line-height:25px;color:#fff">丹麦杯</div>
<div class="t" style="left:84px;top:579px;width:79px;height:25px;line-height:25px;">25-09-03</div>
<div class="t" style="left:163px;top:579px;width:114px;height:25px;line-height:25px;"><span class="tm">堡鲁本B1909</span></div>
<div class="t" style="left:277px;top:579px;width:93px;height:25px;line-height:25px;"><span style="color:#c92828">0-3</span>(0-0)</div>
<div class="t" style="left:370px;top:579px;width:41px;height:25px;line-height:25px;">0-0</div>
<div class="t" style="left:411px;top:579px;width:78px;height:25px;line-height:25px;"><span style="color:#0a7d0a">霍布罗</span></div>
<div class="t" style="left:890px;top:579px;width:40px;height:25px;line-height:25px;"><span style="color:#c92828">胜</span></div>
<div class="t" style="left:3px;top:605px;width:81px;height:25px;line-height:25px;color:#fff">丹麦甲</div>
<div class="t" style="left:84px;top:605px;width:79px;height:25px;line-height:25px;">25-08-30</div>
<div class="t" style="left:163px;top:605px;width:114px;height:25px;line-height:25px;"><span class="tm">哈维德夫</span></div>
<div class="t" style="left:277px;top:605px;width:93px;height:25px;line-height:25px;"><span style="color:#c92828">1-1</span>(1-0)</div>
<div class="t" style="left:370px;top:605px;width:41px;height:25px;line-height:25px;">4-0</div>
<div class="t" style="left:411px;top:605px;width:78px;height:25px;line-height:25px;"><span style="color:#0a7d0a">霍布罗</span></div>
<div class="t" style="left:489px;top:605px;width:51px;height:25px;line-height:25px;">0.84</div>
<div class="t" style="left:540px;top:605px;width:88px;height:25px;line-height:25px;">平/半</div>
<div class="t" style="left:628px;top:605px;width:54px;height:25px;line-height:25px;">1.05</div>
<div class="t" style="left:682px;top:605px;width:69px;height:25px;line-height:25px;">2.08</div>
<div class="t" style="left:751px;top:605px;width:69px;height:25px;line-height:25px;">3.46</div>
<div class="t" style="left:820px;top:605px;width:70px;height:25px;line-height:25px;">3.16</div>
<div class="t" style="left:890px;top:605px;width:40px;height:25px;line-height:25px;"><span style="color:#0a7d0a">平</span></div>
<div class="t" style="left:930px;top:605px;width:40px;height:25px;line-height:25px;"><span style="color:#c92828">赢</span></div>
<div class="t" style="left:970px;top:605px;width:60px;height:25px;line-height:25px;"><span style="color:#0a0ac8">小</span></div>
<div class="t" style="left:3px;top:631px;width:81px;height:25px;line-height:25px;color:#fff">丹麦甲</div>
<div class="t" style="left:84px;top:631px;width:79px;height:25px;line-height:25px;">25-08-24</div>
<div class="t" style="left:163px;top:631px;width:114px;height:25px;line-height:25px;"><span style="color:#0a7d0a">霍布罗</span></div>
<div class="t" style="left:277px;top:631px;width:93px;height:25px;line-height:25px;"><span style="color:#c92828">2-0</span>(1-0)</div>
<div class="t" style="left:370px;top:631px;width:41px;height:25px;line-height:25px;">1-5</div>
<div class="t" style="left:411px;top:631px;width:78px;height:25px;line-height:25px;"><span class="tm">埃斯比约</span></div>
<div class="t" style="left:489px;top:631px;width:51px;height:25px;line-height:25px;">0.98</div>
<div class="t" style="left:540px;top:631px;width:88px;height:25px;line-height:25px;">受平/半</div>
<div class="t" style="left:628px;top:631px;width:54px;height:25px;line-height:25px;">0.91</div>
<div class="t" style="left:682px;top:631px;width:69px;height:25px;line-height:25px;">2.87</div>
<div class="t" style="left:751px;top:631px;width:69px;height:25px;line-height:25px;">3.74</div>
<div class="t" style="left:820px;top:631px;width:70px;height:25px;line-height:25px;">2.12</div>
<div class="t" style="left:890px;top:631px;width:40px;height:25px;line-height:25px;"><span style="color:#c92828">胜</span></div>
<div class="t" style="left:930px;top:631px;width:40px;height:25px;line-height:25px;"><span style="color:#c92828">赢</span></div>
<div class="t" style="left:970px;top:631px;width:60px;height:25px;line-height:25px;"><span style="color:#0a0ac8">小</span></div>
<div class="t" style="left:3px;top:657px;width:81px;height:25px;line-height:25px;color:#fff">丹麦甲</div>
<div class="t" style="left:84px;top:657px;width:79px;height:25px;line-height:25px;">25-08-21</div>
<div class="t" style="left:163px;top:657px;width:114px;height:25px;line-height:25px;"><span style="color:#0a7d0a">霍布罗</span></div>
<div class="t" style="left:277px;top:657px;width:93px;height:25px;line-height:25px;"><span style="color:#c92828">0-1</span>(0-0)</div>
<div class="t" style="left:370px;top:657px;width:41px;height:25px;line-height:25px;">7-3</div>
<div class="t" style="left:411px;top:657px;width:78px;height:25px;line-height:25px;"><span class="tm">霍森斯</span></div>
<div class="t" style="left:489px;top:657px;width:51px;height:25px;line-height:25px;">0.91</div>
<div class="t" style="left:540px;top:657px;width:88px;height:25px;line-height:25px;">受半球</div>
<div class="t" style="left:628px;top:657px;width:54px;height:25px;line-height:25px;">0.98</div>
<div class="t" style="left:682px;top:657px;width:69px;height:25px;line-height:25px;">3.69</div>
<div class="t" style="left:751px;top:657px;width:69px;height:25px;line-height:25px;">3.29</div>
<div class="t" style="left:820px;top:657px;width:70px;height:25px;line-height:25px;">1.95</div>
<div class="t" style="left:890px;top:657px;width:40px;height:25px;line-height:25px;"><span style="color:#0a0ac8">负</span></div>
<div class="t" style="left:930px;top:657px;width:40px;height:25px;line-height:25px;"><span style="color:#0a0ac8">输</span></div>
<div class="t" style="left:970px;top:657px;width:60px;height:25px;line-height:25px;"><span style="color:#0a0ac8">小</span></div>
<div class="t" style="left:3px;top:683px;width:81px;height:25px;line-height:25px;color:#fff">丹麦甲</div>
<div class="t" style="left:84px;top:683px;width:79px;height:25px;line-height:25px;">25-08-16</div>
<div class="t" style="left:163px;top:683px;width:114px;height:25px;line-height:25px;"><span class="tm">希勒罗德(中)</span></div>
<div class="t" style="left:277px;top:683px;width:93px;height:25px;line-height:25px;"><span style="color:#c92828">0-2</span>(0-1)</div>
<div class="t" style="left:370px;top:683px;width:41px;height:25px;line-height:25px;">6-7</div>
<div class="t" style="left:411px;top:683px;width:78px;height:25px;line-height:25px;"><span style="color:#0a7d0a">霍布罗</span></div>
<div class="t" style="left:489px;top:683px;width:51px;height:25px;line-height:25px;">1.00</div>
<div class="t" style="left:540px;top:683px;width:88px;height:25px;line-height:25px;">半球</div>
<div class="t" style="left:628px;top:683px;width:54px;height:25px;line-height:25px;">0.89</div>
<div class="t" style="left:682px;top:683px;width:69px;height:25px;line-height:25px;">1.71</div>
<div class="t" style="left:751px;top:683px;width:69px;height:25px;line-height:25px;">3.84</div>
<div class="t" style="left:820px;top:683px;width:70px;height:25px;line-height:25px;">4.19</div>
<div class="t" style="left:890px;top:683px;width:40px;height:25px;line-height:25px;"><span style="color:#c92828">胜</span></div>
<div class="t" style="left:930px;top:683px;width:40px;height:25px;line-height:25px;"><span style="color:#c92828">赢</span></div>
<div class="t" style="left:970px;top:683px;width:60px;height:25px;line-height:25px;"><span style="color:#0a0ac8">小</span></div>
<div class="t" style="left:4px;top:709px;width:1026px;height:25px;line-height:25px;letter-spacing:0.15px">近<span style="color:#c92828">10</span>场,胜4平3负3, 胜率:<span style="color:#c92828">40%</span> 让胜率:<span style="color:#c92828">66.7%</span> 大率:<span style="color:#c92828">55.6%</span> 单率:<span style="color:#c92828">50%</span></div>
<div class="l" style="left:438px;top:9px;color:#fff;font-weight:bold;font-size:15px;line-height:18px">近期战绩</div>
<input type="radio" name="v" style="left:504px;top:12px">
<div class="l" style="left:521px;top:10px;color:#fff;font-size:12px;line-height:18px">竖版</div>
<input type="radio" name="v" checked style="left:554px;top:12px">
<div class="l" style="left:572px;top:10px;color:#fff;font-size:12px;line-height:18px">横版</div>
<div class="l" style="left:23px;top:39px;font-weight:bold;color:#222;line-height:16px">埃斯比约</div>
<div class="l" style="left:414px;top:39px;color:#444;line-height:16px">近</div>
<select style="left:430px;top:38px;width:38px;height:17px;font-size:12px"><option>10</option></select>
<div class="l" style="left:472px;top:39px;color:#444;line-height:16px">场</div>
<input type="checkbox"  style="left:488px;top:38px">
<div class="l" style="left:505px;top:39px;color:#444;line-height:16px">同主</div>
<input type="checkbox" checked style="left:528px;top:38px">
<div class="l" style="left:541px;top:39px;color:#444;line-height:16px">丹麦甲</div>
<input type="checkbox" checked style="left:577px;top:38px">
<div class="l" style="left:590px;top:39px;color:#444;line-height:16px">丹麦杯</div>
<input type="checkbox" checked style="left:626px;top:38px">
<div class="l" style="left:639px;top:39px;color:#444;line-height:16px">球会友谊</div>
<div class="l" style="left:23px;top:390px;font-weight:bold;color:#222;line-height:16px">霍布罗</div>
<div class="l" style="left:406px;top:390px;color:#444;line-height:16px">近</div>
<select style="left:422px;top:389px;width:38px;height:17px;font-size:12px"><option>10</option></select>
<div class="l" style="left:464px;top:390px;color:#444;line-height:16px">场</div>
<input type="checkbox"  style="left:480px;top:389px">
<div class="l" style="left:496px;top:390px;color:#444;line-height:16px">同客</div>
<input type="checkbox" checked style="left:524px;top:389px">
<div class="l" style="left:537px;top:390px;color:#444;line-height:16px">丹麦甲</div>
<input type="checkbox" checked style="left:573px;top:389px">
<div class="l" style="left:586px;top:390px;color:#444;line-height:16px">丹麦杯</div>
<input type="checkbox" checked style="left:622px;top:389px">
<div class="l" style="left:635px;top:390px;color:#444;line-height:16px">球会友谊</div>
<select style="left:548px;top:58px;width:61px;height:18px;font-size:13px"><option>Crow*</option></select>
<select style="left:617px;top:58px;width:51px;height:18px;font-size:13px"><option>终指</option></select>
<select style="left:733px;top:58px;width:69px;height:18px;font-size:13px"><option>平均值 </option></select>
<select style="left:811px;top:58px;width:51px;height:18px;font-size:13px"><option>终指</option></select>
<select style="left:938px;top:58px;width:50px;height:18px;font-size:13px"><option>全场</option></select>
<select style="left:526px;top:409px;width:61px;height:18px;font-size:13px"><option>Crow*</option></select>
<select style="left:594px;top:409px;width:51px;height:18px;font-size:13px"><option>终指</option></select>
<select style="left:722px;top:409px;width:69px;height:18px;font-size:13px"><option>平均值 </option></select>
<select style="left:799px;top:409px;width:51px;height:18px;font-size:13px"><option>终指</option></select>
<select style="left:935px;top:409px;width:50px;height:18px;font-size:13px"><option>全场</option></select>
</body></html>
